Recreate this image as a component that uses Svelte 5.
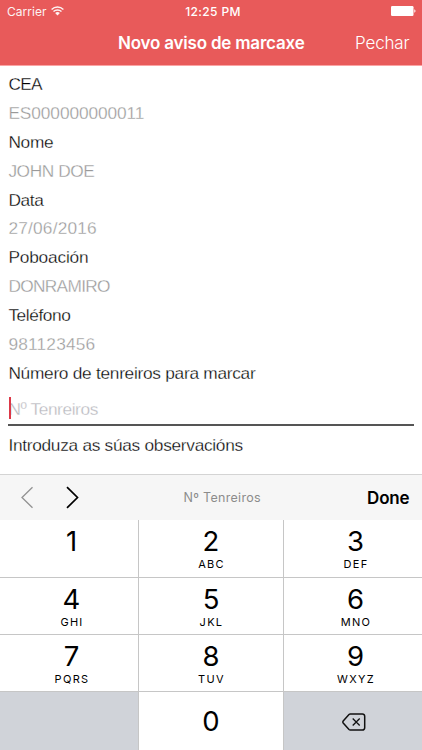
<script>
  const fields = [
    { label: 'CEA', value: 'ES000000000011', lw: 33.5, vw: 136 },
    { label: 'Nome', value: 'JOHN DOE', lw: 45, vw: 86 },
    { label: 'Data', value: '27/06/2016', lw: 35, vw: 88.5 },
    { label: 'Poboación', value: 'DONRAMIRO', lw: 80, vw: 101.5 },
    { label: 'Teléfono', value: '981123456', lw: 62, vw: 87 }
  ];
  const rows = [
    [['1', ''], ['2', 'ABC'], ['3', 'DEF']],
    [['4', 'GHI'], ['5', 'JKL'], ['6', 'MNO']],
    [['7', 'PQRS'], ['8', 'TUV'], ['9', 'WXYZ']]
  ];

  // Spreads the letters of a text so that it takes the given width.
  function fit(node, width) {
    const natural = node.getBoundingClientRect().width;
    node.style.letterSpacing = `${(width - natural) / node.textContent.length}px`;
  }
</script>

<div class="screen">
  <header>
    <div class="status">
      <div class="carrier">
        <span use:fit={39.5}>Carrier</span>
        <svg width="13" height="10" viewBox="0 0 13 10" fill="none" stroke="#fff" stroke-width="1.4">
          <path d="M.6 3.4a8.400 8.400 0 0 1 11.800 0M2.500 5.600a5.700 5.700 0 0 1 8 0" />
          <path d="M4.100 7.100a3.400 3.400 0 0 1 4.800 0L6.500 9.600z" fill="#fff" stroke="none" />
        </svg>
      </div>
      <b use:fit={55.5}>12:25 PM</b>
      <div class="battery">
        <svg width="25" height="10" viewBox="0 0 25 10" fill="#fff">
          <rect width="22.5" height="10" rx="1.2" /><path d="M23.3 3.3c1.6.4 1.6 3 0 3.4z" />
        </svg>
      </div>
    </div>
    <div class="nav">
      <h1><span use:fit={186.5}>Novo aviso de marcaxe</span></h1>
      <button><span use:fit={54.5}>Pechar</span></button>
    </div>
  </header>

  <main>
    {#each fields as f}
      <div class="line"><span use:fit={f.lw}>{f.label}</span></div>
      <div class="line value"><span use:fit={f.vw}>{f.value}</span></div>
    {/each}
    <div class="line"><span use:fit={247}>Número de tenreiros para marcar</span></div>
    <div class="input"><i class="caret"></i><span use:fit={89.5}>Nº Tenreiros</span></div>
    <div class="line notes"><span use:fit={234.5}>Introduza as súas observacións</span></div>
  </main>

  <section class="keyboard">
    <div class="toolbar">
      <svg class="arrows" width="60" height="24" viewBox="0 0 60 24" fill="none">
        <path d="M12.500 1.200 2 11.500l10.500 10.300" stroke="#929292" stroke-width="1.300" />
        <path d="M47 1.200l10.500 10.300L47 21.800" stroke="#000" stroke-width="1.700" />
      </svg>
      <span class="hint"><span use:fit={77.5}>Nº Tenreiros</span></span>
      <button class="done"><span use:fit={42.5}>Done</span></button>
    </div>
    <div class="keys">
      {#each rows as row}
        {#each row as [digit, letters]}
          <div class="key"><span class="digit">{digit}</span><span class="letters">{letters}</span></div>
        {/each}
      {/each}
      <div class="key last grey"></div>
      <div class="key last"><span class="digit">0</span></div>
      <div class="key last grey">
        <svg width="24" height="18" viewBox="0 0 24 18" fill="none" stroke="#111" stroke-width="1.500">
          <path d="M8.300 1h12.200a2.200 2.200 0 0 1 2.200 2.200v11.600a2.200 2.200 0 0 1-2.200 2.200H8.300Q7.500 17 7 16.500L1.200 10Q.5 9 1.200 8L7 1.500Q7.500 1 8.300 1z" />
          <path d="M10.700 5.500l7 7M17.700 5.500l-7 7" stroke-width="1.300" />
        </svg>
      </div>
    </div>
  </section>
</div>

<style>
  .screen {
    width: 422px;
    height: 750px;
    display: flex;
    flex-direction: column;
    overflow: hidden;
    background: #fff;
    font-family: Inter, sans-serif;
    color: #000;
  }
  button { border: 0; padding: 0; background: none; font: inherit; color: inherit; }
  span { white-space: nowrap; }
  header {
    box-sizing: border-box;
    height: 66px;
    flex: none;
    background: #e85a5a;
    border-bottom: 1px solid #fba4a4;
    color: #fff;
  }
  .status {
    display: grid;
    grid-template-columns: 1fr auto 1fr;
    align-items: center;
    height: 22px;
    padding: 0 6px 0 7px;
    font-size: 12px;
  }
  .status b { font-weight: 500; margin-left: 3px; }
  .carrier { display: flex; align-items: center; gap: 4.500px; opacity: .93; }
  .battery { display: flex; justify-content: flex-end; }
  .nav {
    display: flex;
    align-items: center;
    justify-content: space-between;
    height: 42px;
    padding: 0 12.500px 0 118px;
    font-size: 17px;
  }
  h1 { margin: 0; font-size: 17px; font-weight: 600; }
  .nav button { font-weight: 350; }
  main {
    height: 408px;
    flex: none;
    box-sizing: border-box;
    padding: 4.200px 8px 0;
    font-family: "Liberation Sans", Arial, sans-serif;
    font-size: 17.300px;
    color: #000;
  }
  /* A white outline thins the regular weight to a light one. */
  main span { margin-left: .4px; -webkit-text-stroke: .3px #fff; }
  .line { height: 28.850px; line-height: 28.850px; }
  .value { color: #999; }
  .input {
    display: flex;
    align-items: center;
    height: 36px;
    box-sizing: border-box;
    margin-top: 2.800px;
    padding-top: 4px;
    border-bottom: 2px solid #555;
    color: #b8b8be;
    position: relative;
  }
  .caret { position: absolute; left: .5px; top: 7px; width: 2px; height: 22px; background: #dc3847; }
  .notes { margin-top: 5px; }
  .keyboard { flex: 1; }
  .toolbar {
    box-sizing: border-box;
    height: 46px;
    border-top: 1px solid #d4d4d4;
    background: #f6f6f6;
    display: grid;
    grid-template-columns: 1fr auto 1fr;
    align-items: center;
    padding: 0 12.500px 0 20px;
  }
  .hint { font-size: 12.500px; color: #8c8c8c; margin-left: 15px; }
  .done { justify-self: end; font-size: 17px; font-weight: 600; }
  .keys {
    display: grid;
    grid-template-columns: 139px 145px 138px;
    grid-template-rows: 58px 57px 57px 58px;
  }
  .key {
    box-sizing: border-box;
    display: flex;
    flex-direction: column;
    align-items: center;
    border-right: 1px solid #c6c6c6;
    border-bottom: 1px solid #c6c6c6;
    padding-top: 5px;
  }
  .key:nth-child(3n + 1) { padding-left: 5px; }
  .key:nth-child(3n) { padding-left: 5px; border-right: 0; }
  .digit { font-size: 27.500px; line-height: 32px; }
  .letters { font-size: 11px; line-height: 13px; margin-top: .5px; letter-spacing: 1.300px; padding-left: 1px; }
  .last { justify-content: center; border-bottom: 0; padding-top: 0; }
  .grey { background: #d0d3d9; }
  .grey svg { margin: 2px 3px 0 0; }
</style>
